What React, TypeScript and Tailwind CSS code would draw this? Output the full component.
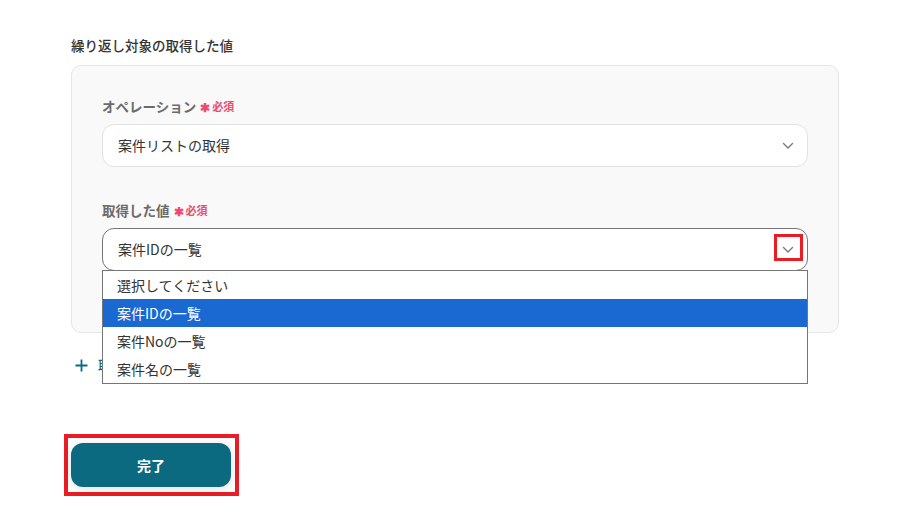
import React from "react";

const font = { fontFamily: '"Noto Sans CJK JP", "Noto Sans", sans-serif' };

function Chevron({ className = "" }: { className?: string }) {
  return (
    <svg width="12" height="8" viewBox="0 0 12 8" className={className} fill="none">
      <path d="M1.5 1.5 L6 6 L10.5 1.5" stroke="#7a7a7a" strokeWidth="1.4" strokeLinecap="round" strokeLinejoin="round" />
    </svg>
  );
}

function Label({ text }: { text: string }) {
  return (
    <div className="flex items-center h-[20px] text-[13.5px] font-bold text-[#6b6b6b]">
      <span>{text}</span>
      <span className="ml-[4px] text-[#ef4a6a] text-[12px] leading-none mt-[2px]">✱</span>
      <span className="ml-[2px] text-[11px] text-[#ef4a6a]">必須</span>
    </div>
  );
}

export default function App() {
  return (
    <div className="w-[921px] h-[525px] bg-white relative overflow-hidden" style={font}>
      <div className="pl-[71px] pt-[35px] w-[839px]">
        <div className="text-[13.5px] font-medium text-[#333] h-[20px] leading-[20px]">繰り返し対象の取得した値</div>
        <div className="mt-[10px] rounded-[10px] border border-[#e6e6e6] bg-[#f9f9f9] px-[30px] pt-[30px] h-[268px]">
          <Label text="オペレーション" />
          <div className="mt-[8px] h-[43px] rounded-[12px] border border-[#e2e2e2] bg-white flex items-center justify-between pl-[15px] pr-[13px]">
            <span className="text-[14px] text-[#333]">案件リストの取得</span>
            <Chevron />
          </div>
          <div className="mt-[33px]">
            <Label text="取得した値" />
          </div>
          <div className="relative mt-[8px]">
            <div className="h-[43px] rounded-[12px] border border-[#767676] bg-white flex items-center justify-between pl-[15px] pr-[13px]">
              <span className="text-[14px] text-[#333]">案件IDの一覧</span>
              <Chevron />
            </div>
            <div className="absolute right-[5px] top-[6px] w-[29px] h-[27px] border-[3px] border-[#ea1c24]" />
            <div className="absolute left-0 right-0 top-[42px] border border-[#767676] bg-white z-10">
              <div className="h-[28px] flex items-center pl-[14px] text-[14px] text-[#333]">選択してください</div>
              <div className="h-[28px] flex items-center pl-[14px] text-[14px] text-white bg-[#1a69d2]">案件IDの一覧</div>
              <div className="h-[28px] flex items-center pl-[14px] text-[14px] text-[#333]">案件Noの一覧</div>
              <div className="h-[28px] flex items-center pl-[14px] text-[14px] text-[#333]">案件名の一覧</div>
            </div>
          </div>
        </div>
        <div className="mt-[20px] flex items-center h-[24px] pl-[4px]">
          <svg width="13" height="13" viewBox="0 0 13 13">
            <path d="M6.5 0.5 V12.5 M0.5 6.5 H12.5" stroke="#0b6a80" strokeWidth="1.8" />
          </svg>
          <span className="ml-[10px] text-[13px] text-[#0b6a80] font-medium">取</span>
        </div>
        <div className="mt-[57px] ml-[-7px] w-[175px] h-[62px] border-[4px] border-[#ea1c24] pl-[3px] pt-[5px]">
          <button className="w-[160px] h-[44px] rounded-[12px] bg-[#0b6a80] text-white text-[14px] font-bold shadow-[0_2px_12px_rgba(0,0,0,0.12)] flex items-center justify-center">
            完了
          </button>
        </div>
      </div>
    </div>
  );
}
